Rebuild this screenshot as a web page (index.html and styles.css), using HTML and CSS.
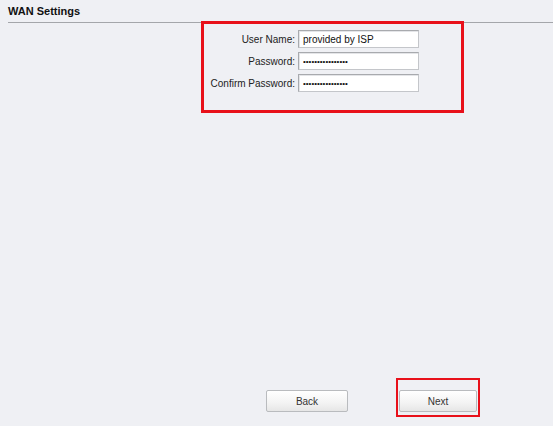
FILE: index.html
```html
<!DOCTYPE html>
<html lang="en">
<head>
  <meta charset="UTF-8" />
  <title>WAN Settings</title>
  <link rel="stylesheet" href="styles.css">
</head>
<body>

<div class="page">
  <h1 class="title">WAN Settings</h1>

  <form class="wan-form mark">
    <label for="userName">User Name:</label>
    <input type="text" id="userName" value="provided by ISP">

    <label for="password">Password:</label>
    <input type="password" id="password" class="pwd" value="abcdefghijklmnop">

    <label for="confirmPassword">Confirm Password:</label>
    <input type="password" id="confirmPassword" class="pwd" value="abcdefghijklmnop">
  </form>

  <div class="actions">
    <button type="button" class="btn btn-back">Back</button>
    <div class="mark next-wrap">
      <button type="button" class="btn">Next</button>
    </div>
  </div>
</div>

</body>
</html>
```

FILE: styles.css
```css
* {
  box-sizing: border-box;
  margin: 0;
  padding: 0;
}

body {
  background: #eff0f4;
  font-family: "Liberation Sans", Arial, sans-serif;
  color: #222;
}

.page {
  display: flex;
  flex-direction: column;
  height: 426px;
  padding-bottom: 9px;
}

.title {
  margin-left: 8px;
  padding: 4px 0 4px 0;
  font-size: 11px;
  line-height: 14px;
  font-weight: bold;
  color: #111;
  border-bottom: 1px solid #a4a6aa;
}

.mark {
  border: 3px solid #e8101a;
}

.wan-form {
  display: grid;
  grid-template-columns: 90px 121px;
  column-gap: 3px;
  row-gap: 4px;
  align-items: center;
  width: 263px;
  margin: -2px 0 0 201px;
  padding: 6px 0 18px 1px;
}

.wan-form label {
  text-align: right;
  font-size: 10px;
  color: #222;
}

.wan-form input {
  height: 18px;
  padding: 0 4px;
  font-family: "Liberation Sans", Arial, sans-serif;
  font-size: 10px;
  color: #111;
  background: #fff;
  border: 1px solid #c4c6ca;
  border-top-color: #a8aaae;
  border-left-color: #a8aaae;
  box-shadow: inset 1px 1px 0 #e4e5e8;
  outline: none;
}

.wan-form input.pwd {
  font-size: 8px;
}

.actions {
  display: flex;
  align-items: flex-end;
  margin-top: auto;
  padding-left: 266px;
}

.btn {
  width: 82px;
  height: 22px;
  font-family: "Liberation Sans", Arial, sans-serif;
  font-size: 10px;
  color: #333;
  background: linear-gradient(#ffffff, #f3f3f3 60%, #e6e6e6);
  border: 1px solid #b9bbbe;
  border-radius: 2px;
}

.btn-back {
  margin-bottom: 5px;
}

.next-wrap {
  margin-left: 48px;
  padding: 10px 0 3px 0;
  border-width: 2px;
  width: 84px;
  display: flex;
  justify-content: center;
}

.next-wrap .btn {
  width: 78px;
}
```
